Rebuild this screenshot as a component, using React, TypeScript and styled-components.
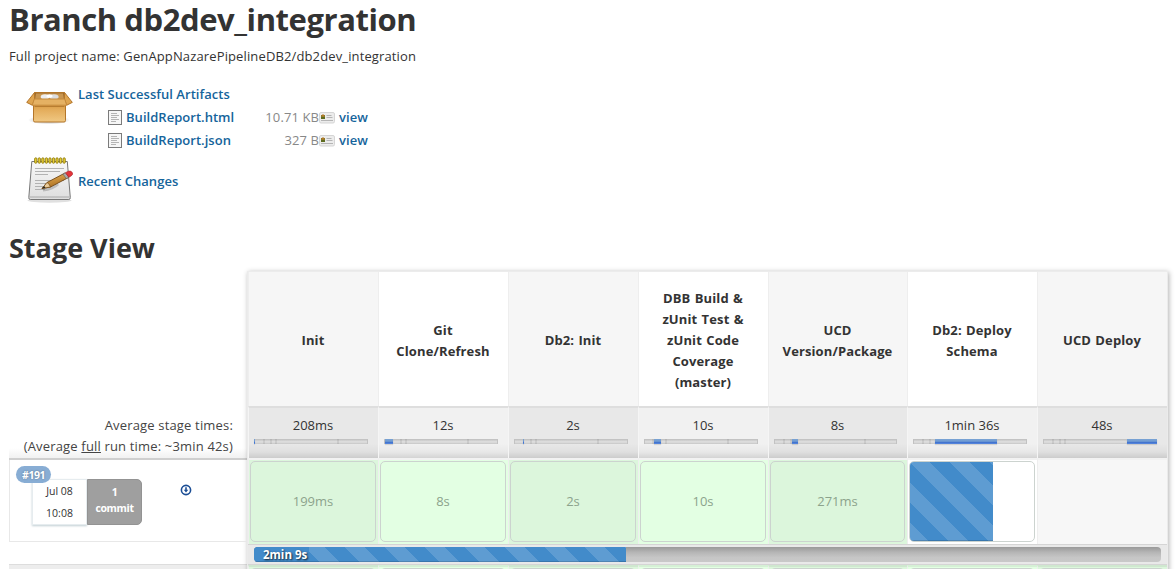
import React from "react";
import styled, { createGlobalStyle, css } from "styled-components";

const GlobalStyle = createGlobalStyle`
  *, *::before, *::after { box-sizing: border-box; }
  html, body { margin: 0; background: #fff; overflow: hidden; }
  body {
    font-family: "Open Sans", "Noto Sans", sans-serif;
    font-size: 13px;
    color: #333;
  }
  h1, h2, p { margin: 0; }
`;

const Page = styled.main`
  width: 1176px;
  height: 569px;
  padding-left: 9px;
  overflow: hidden;
`;

const Title = styled.h1`
  height: 40px;
  line-height: 39px;
  font-size: 31px;
  font-weight: 700;
  letter-spacing: -0.43px;
  white-space: nowrap;
`;

const ProjectName = styled.p`
  margin-top: 6px;
  line-height: 20px;
  font-size: 13px;
  letter-spacing: 0.13px;
  white-space: nowrap;
`;

const Links = styled.section`
  display: flex;
  flex-direction: column;
  padding: 14px 0 0 17px;
`;

const LinkRow = styled.div<{ $height: number }>`
  display: flex;
  height: ${(p) => p.$height}px;
`;

const Link = styled.a`
  color: #15649b;
  font-weight: 600;
  font-size: 13px;
  letter-spacing: 0.03px;
  white-space: nowrap;
`;

const Artifacts = styled.div`
  margin-left: 4px;
  padding-top: 3px;
  line-height: 23px;
`;

const FileRow = styled.div`
  display: grid;
  grid-template-columns: 18px 122px 71px 20px 40px;
  align-items: center;
  height: 23px;
  margin-left: 30px;
`;

const FileSize = styled.span`
  color: #888;
  text-align: right;
  letter-spacing: 0.1px;
`;

const ChangesLabel = styled.div`
  margin-left: 4px;
  padding-top: 14px;
  line-height: 23px;
`;

const Subtitle = styled.h2`
  margin-top: 22px;
  height: 40px;
  line-height: 40px;
  font-size: 27px;
  font-weight: 700;
`;

const StageView = styled.section`
  display: flex;
  margin-top: 3px;
`;

const SideColumn = styled.div`
  width: 238px;
  padding-top: 137px;
`;

const AverageLabel = styled.div`
  height: 52px;
  padding: 7px 14px 0 0;
  text-align: right;
  line-height: 21px;
  letter-spacing: 0.17px;
  color: #444;
  white-space: nowrap;
  border-bottom: 2px solid #cfcfcf;
  background: linear-gradient(to bottom, #fff 80%, #f1f1f1);
`;

const RunInfo = styled.div`
  position: relative;
  display: flex;
  height: 82px;
  padding: 19px 0 0 22px;
  border: solid #e8e8e8;
  border-width: 0 0 1px 1px;
`;

const RunBadge = styled.span`
  position: absolute;
  left: 6px;
  top: 6px;
  width: 35px;
  height: 17px;
  border-radius: 9px;
  background: #88add4;
  color: #fff;
  font-size: 10.5px;
  font-weight: 700;
  line-height: 18px;
  text-align: center;
  letter-spacing: -0.5px;
  text-shadow: 0 0 2px rgba(0, 0, 0, 0.35);
`;

const RunDate = styled.div`
  width: 55px;
  height: 46px;
  font-size: 10.5px;
  line-height: 22px;
  text-align: center;
  border: 1px solid #e6ecef;
  box-shadow: 0 1px 2px rgba(0, 60, 80, 0.25);
`;

const Commits = styled.div`
  width: 55px;
  height: 46px;
  padding-top: 4px;
  border-radius: 0 5px 5px 0;
  border: 1px solid #939393;
  background: #9f9f9f;
  color: #fff;
  font-size: 10.5px;
  font-weight: 700;
  line-height: 16px;
  text-align: center;
  letter-spacing: -0.35px;
`;

const ArtifactsMark = styled.span`
  display: block;
  margin: 5px 0 0 38px;
  line-height: 0;
`;

const NextRun = styled.div`
  height: 10px;
  margin-top: 22px;
  border-top: 1px solid #ddd;
  background: #ededed;
`;

const Stages = styled.div`
  width: 921px;
  height: 310px;
  border: 1px solid #ebebeb;
  border-top-color: #ececec;
  box-shadow: 1px 1px 5px rgba(0, 0, 0, 0.3);
`;

const StageRow = styled.div<{ $height: number }>`
  display: grid;
  grid-template-columns: 130px 130px 130px 130px 139px 130px 130px;
  height: ${(p) => p.$height}px;
`;

const shaded = (odd: string, even: string) => css`
  background-color: ${even};
  &:nth-child(odd) { background-color: ${odd}; }
`;

const HeaderCell = styled.div`
  display: flex;
  align-items: center;
  justify-content: center;
  padding: 3px 1px 0 0;
  border-left: 1px solid #eee;
  font-weight: 700;
  line-height: 21px;
  text-align: center;
  white-space: pre-line;
  letter-spacing: 0.12px;
  word-spacing: 0.8px;
  ${shaded("#f6f6f6", "#fff")}
`;

const AverageCell = styled.div`
  padding: 7px 10px 0 5px;
  border-left: 1px solid #f5f5f5;
  border-top: 2px solid #dedede;
  background-image: linear-gradient(to bottom, transparent 72%, rgba(0, 0, 0, 0.04) 88%, rgba(0, 0, 0, 0.12));
  ${shaded("#e8e8e8", "#f1f1f1")}
`;

const AverageTime = styled.div`
  height: 20px;
  padding-left: 4px;
  line-height: 20px;
  text-align: center;
`;

const Track = styled.div`
  position: relative;
  height: 5px;
  margin-top: 4px;
  background: linear-gradient(#bdbdbd, #dcdcdc 50%, #d9d9d9 70%, #c6c6c6);
  border: solid #c2c2c2;
  border-width: 0 1px;
`;

const Tick = styled.span`
  position: absolute;
  top: 0;
  width: 2px;
  height: 5px;
  background: rgba(0, 0, 0, 0.07);
`;

const Portion = styled.span`
  position: absolute;
  top: 0;
  height: 5px;
  background: linear-gradient(#79a3d3, #6f9bd3 45%, #4374cf 70%, #5b8be0);
  box-shadow: 0 1px 1px rgba(0, 0, 0, 0.12);
`;

const stripes = css`
  background-color: #428bca;
  background-image: linear-gradient(
    45deg,
    rgba(255, 255, 255, 0.15) 25%,
    transparent 25%,
    transparent 50%,
    rgba(255, 255, 255, 0.15) 50%,
    rgba(255, 255, 255, 0.15) 75%,
    transparent 75%
  );
  background-size: 40px 40px;
`;

const RunCell = styled.div<{ $state: "done" | "running" | "pending"; $older?: boolean }>`
  padding: 1px 1px 2px 1px;
  border-left: 1px solid #eee;
  border-top: 2px solid ${(p) => (p.$older ? "rgba(0, 0, 0, 0.06)" : "#f2f2f2")};
  ${(p) =>
    p.$state === "done"
      ? shaded("#dcf6dc", "#e3ffe3")
      : shaded("#f7f7f7", "#fff")}
`;

const RunBox = styled.div`
  display: flex;
  align-items: center;
  justify-content: center;
  height: 81px;
  width: calc(100% - 1px);
  border: 1px solid #ccd3cf;
  border-radius: 5px;
  color: #8ca38c;
  overflow: hidden;
`;

const RunTime = styled.span`
  padding-bottom: 2px;
`;

const StageProgress = styled.div`
  width: 83px;
  height: 79px;
  margin-right: auto;
  box-shadow: inset 0 -1px 0 rgba(0, 0, 0, 0.15);
  ${stripes}
`;

const TotalRow = styled.div`
  height: 21px;
  padding: 2px 6px 0 5px;
  border-top: 1px solid #d5d5d5;
  border-bottom: 1px solid #d5d5d5;
  background: #e9e9e9;
`;

const TotalTrack = styled.div`
  height: 15px;
  margin-left: 1px;
  border-radius: 4px;
  overflow: hidden;
  background: linear-gradient(#999, #b5b5b5 35%, #c6c6c6 70%, #c8c8c8);
`;

const TotalBar = styled.div`
  width: 372px;
  height: 15px;
  box-shadow: inset 0 -1px 0 rgba(0, 0, 0, 0.15);
  ${stripes}
  background-position: 11px 0;
`;

const TotalTime = styled.div`
  width: 55px;
  height: 15px;
  padding-left: 9px;
  background: #428bca;
  color: #fff;
  font-size: 11.5px;
  font-weight: 700;
  line-height: 16px;
  white-space: nowrap;
  text-shadow: 1px 1px 2px rgba(0, 0, 0, 0.8);
  box-shadow: inset 0 -1px 0 rgba(0, 0, 0, 0.15);
`;

const BoxIcon = () => (
  <svg width="48" height="68" viewBox="0 0 48 68">
    <defs>
      <linearGradient id="carton" x1="0" y1="0" x2="0" y2="1">
        <stop offset="0" stopColor="#d08d35" />
        <stop offset=".35" stopColor="#e3ab59" />
        <stop offset="1" stopColor="#f0c883" />
      </linearGradient>
      <radialGradient id="cartonShadow">
        <stop offset="0" stopColor="#000" stopOpacity=".4" />
        <stop offset="1" stopColor="#000" stopOpacity="0" />
      </radialGradient>
    </defs>
    <ellipse cx="23" cy="40" rx="21" ry="4.5" fill="url(#cartonShadow)" />
    <path d="M7.5 22h32v18.5q0 1.5-1.5 1.5H9q-1.5 0-1.5-1.5z" fill="url(#carton)" stroke="#b4762a" />
    <path d="M8.5 12.5h30l2 10h-34z" fill="#9c6a2d" stroke="#b4762a" />
    <path d="M10 13.5h27l1 6H9z" fill="#c99650" />
    <ellipse cx="19" cy="16.8" rx="4.3" ry="2.6" fill="#eee" />
    <ellipse cx="28" cy="16.8" rx="4.6" ry="2.6" fill="#ddd" />
    <ellipse cx="23.5" cy="16" rx="3" ry="1.8" fill="#fff" />
    <path d="M8.5 12.5.7 22.4l5.6 2.8 2.3-6z" fill="#dfa550" stroke="#b4762a" strokeLinejoin="round" />
    <path d="M38.5 12.5l7.8 9.9-5.6 2.8-2.3-6z" fill="#dfa550" stroke="#b4762a" strokeLinejoin="round" />
    <path d="M8.3 19h30.4l2 6.2H6.3z" fill="#e5b163" stroke="#c58a3c" />
    <path d="M8.6 26.5h29.8" stroke="#b87d30" />
  </svg>
);

const NotepadIcon = () => (
  <svg width="48" height="48" viewBox="0 0 48 48">
    <defs>
      <linearGradient id="sheet" x1="0" y1="0" x2="0" y2="1">
        <stop offset="0" stopColor="#f8f8f8" />
        <stop offset="1" stopColor="#dedede" />
      </linearGradient>
      <linearGradient id="pencil" x1="0" y1="0" x2=".4" y2="1">
        <stop offset="0" stopColor="#f0bd62" />
        <stop offset="1" stopColor="#a96b1c" />
      </linearGradient>
    </defs>
    <ellipse cx="23.5" cy="44.5" rx="22" ry="2.2" fill="#000" opacity=".12" />
    <path d="M5.8 5.5h35.5l3 36q.1 2-1.5 2H4.3q-1.7 0-1.5-2z" fill="url(#sheet)" stroke="#777" />
    <path d="M3.5 41h40" stroke="#aaa" />
    <path d="M9 12.5h29M9 15.5h25M9 18.5h13M9 24.5h29M9 27.5h16M9 30.5h13M9 33.5h10" stroke="#aaa" strokeWidth=".9" />
    {Array.from({ length: 9 }, (_, i) => (
      <rect key={i} x={8.6 + i * 3.55} y="1.8" width="2.3" height="5.5" rx="1.1" fill="#e8cf35" stroke="#897509" strokeWidth=".8" />
    ))}
    <path d="M17 34q10-1 15-6" stroke="#000" strokeOpacity=".18" strokeWidth="3" fill="none" />
    <path d="M16 32.5l5-6 18-9.5 3.5 4.5-18 9.5z" fill="url(#pencil)" stroke="#6f4615" strokeWidth=".9" />
    <path d="M16 32.5l5-6 1.5 1 1 1.5 1 2z" fill="#ebcb98" stroke="#6f4615" strokeWidth=".7" />
    <path d="M16 32.5l2.2-2.5 1.3 1.8z" fill="#222" />
    <path d="M37 18l2.5-1.3 3.3 4.5-2.6 1.4z" fill="#aaa" stroke="#666" strokeWidth=".6" />
    <path d="M39.5 16.7l3-1.5q3-.8 4 1.8.5 2-1.5 3l-2.2 1.2z" fill="#e4343b" stroke="#b0252b" strokeWidth=".7" />
  </svg>
);

const TextFileIcon = () => (
  <svg width="14" height="15" viewBox="0 0 14 15">
    <rect x=".5" y=".5" width="13" height="14" fill="#f6f6f6" stroke="#7b7b7b" />
    <path d="M3 3.5h6M3 5.5h8M3 7.5h6M3 9.5h8M3 11.5h5" stroke="#b4b4b4" />
  </svg>
);

const ViewIcon = () => (
  <svg width="16" height="12" viewBox="0 0 16 12">
    <rect x=".5" y=".5" width="15" height="10.5" rx="1.5" fill="#ececec" stroke="#d5d5d5" />
    <rect x="2" y="3" width="4" height="4" fill="#8a7a2a" />
    <rect x="3" y="2.5" width="2" height="2" fill="#b87a28" />
    <rect x="2" y="5" width="4" height="2" fill="#5e6c20" />
    <path d="M7.5 3.5h5M7.5 5.5h6M2 8.5h12" stroke="#b5b5b5" />
  </svg>
);

const DownloadIcon = () => (
  <svg width="12" height="12" viewBox="0 0 12 12">
    <circle cx="6" cy="6" r="4.6" fill="#fff" stroke="#1c4e95" strokeWidth="1.6" />
    <path d="M6 3.3v3" stroke="#1c4e95" strokeWidth="1.6" />
    <path d="M3.7 5.8h4.6L6 8.6z" fill="#1c4e95" />
  </svg>
);

const files = [
  { name: "BuildReport.html", size: "10.71 KB" },
  { name: "BuildReport.json", size: "327 B" },
];

interface Stage {
  name: string;
  average: string;
  run?: string;
  start: number;
  width: number;
  ticks: number[];
}

const stages: Stage[] = [
  { name: "Init", average: "208ms", run: "199ms", start: 0, width: 1, ticks: [8, 15, 20, 82] },
  { name: "Git\nClone/Refresh", average: "12s", run: "8s", start: 1, width: 8, ticks: [15, 20, 82] },
  { name: "Db2: Init", average: "2s", run: "2s", start: 9, width: 1, ticks: [15, 20, 82] },
  { name: "DBB Build &\nzUnit Test &\nzUnit Code\nCoverage\n(master)", average: "10s", run: "10s", start: 10, width: 7, ticks: [7, 20, 82] },
  { name: "UCD\nVersion/Package", average: "8s", run: "271ms", start: 18, width: 6, ticks: [8, 15, 89] },
  { name: "Db2: Deploy\nSchema", average: "1min 36s", start: 22, width: 62, ticks: [8, 15] },
  { name: "UCD Deploy", average: "48s", start: 84, width: 30, ticks: [8, 15, 20] },
];

export default function App() {
  return (
    <>
      <GlobalStyle />
      <Page>
        <Title>Branch db2dev_integration</Title>
        <ProjectName>Full project name: GenAppNazarePipelineDB2/db2dev_integration</ProjectName>
        <Links>
          <LinkRow $height={76}>
            <BoxIcon />
            <Artifacts>
              <Link>Last Successful Artifacts</Link>
              {files.map((file) => (
                <FileRow key={file.name}>
                  <TextFileIcon />
                  <Link>{file.name}</Link>
                  <FileSize>{file.size}</FileSize>
                  <ViewIcon />
                  <Link>view</Link>
                </FileRow>
              ))}
            </Artifacts>
          </LinkRow>
          <LinkRow $height={50}>
            <NotepadIcon />
            <ChangesLabel>
              <Link>Recent Changes</Link>
            </ChangesLabel>
          </LinkRow>
        </Links>
        <Subtitle>Stage View</Subtitle>
        <StageView>
          <SideColumn>
            <AverageLabel>
              Average stage times:
              <br />
              (Average <u>full</u> run time: ~3min 42s)
            </AverageLabel>
            <RunInfo>
              <RunDate>
                Jul 08
                <br />
                10:08
              </RunDate>
              <Commits>
                1<br />
                commit
              </Commits>
              <ArtifactsMark>
                <DownloadIcon />
              </ArtifactsMark>
              <RunBadge>#191</RunBadge>
            </RunInfo>
            <NextRun />
          </SideColumn>
          <Stages>
            <StageRow $height={134}>
              {stages.map((s) => (
                <HeaderCell key={s.name}>{s.name}</HeaderCell>
              ))}
            </StageRow>
            <StageRow $height={52}>
              {stages.map((s) => (
                <AverageCell key={s.name}>
                  <AverageTime>{s.average}</AverageTime>
                  <Track>
                    {s.ticks.map((t) => (
                      <Tick key={t} style={{ left: t }} />
                    ))}
                    <Portion style={{ left: s.start - 1, width: s.width }} />
                  </Track>
                </AverageCell>
              ))}
            </StageRow>
            <StageRow $height={86}>
              {stages.map((s, i) => (
                <RunCell key={s.name} $state={s.run ? "done" : i === 5 ? "running" : "pending"}>
                  {s.run && (
                    <RunBox>
                      <RunTime>{s.run}</RunTime>
                    </RunBox>
                  )}
                  {i === 5 && (
                    <RunBox>
                      <StageProgress />
                    </RunBox>
                  )}
                </RunCell>
              ))}
            </StageRow>
            <TotalRow>
              <TotalTrack>
                <TotalBar>
                  <TotalTime>2min 9s</TotalTime>
                </TotalBar>
              </TotalTrack>
            </TotalRow>
            <StageRow $height={16}>
              {stages.map((s) => (
                <RunCell key={s.name} $state="done" $older>
                  <RunBox />
                </RunCell>
              ))}
            </StageRow>
          </Stages>
        </StageView>
      </Page>
    </>
  );
}
